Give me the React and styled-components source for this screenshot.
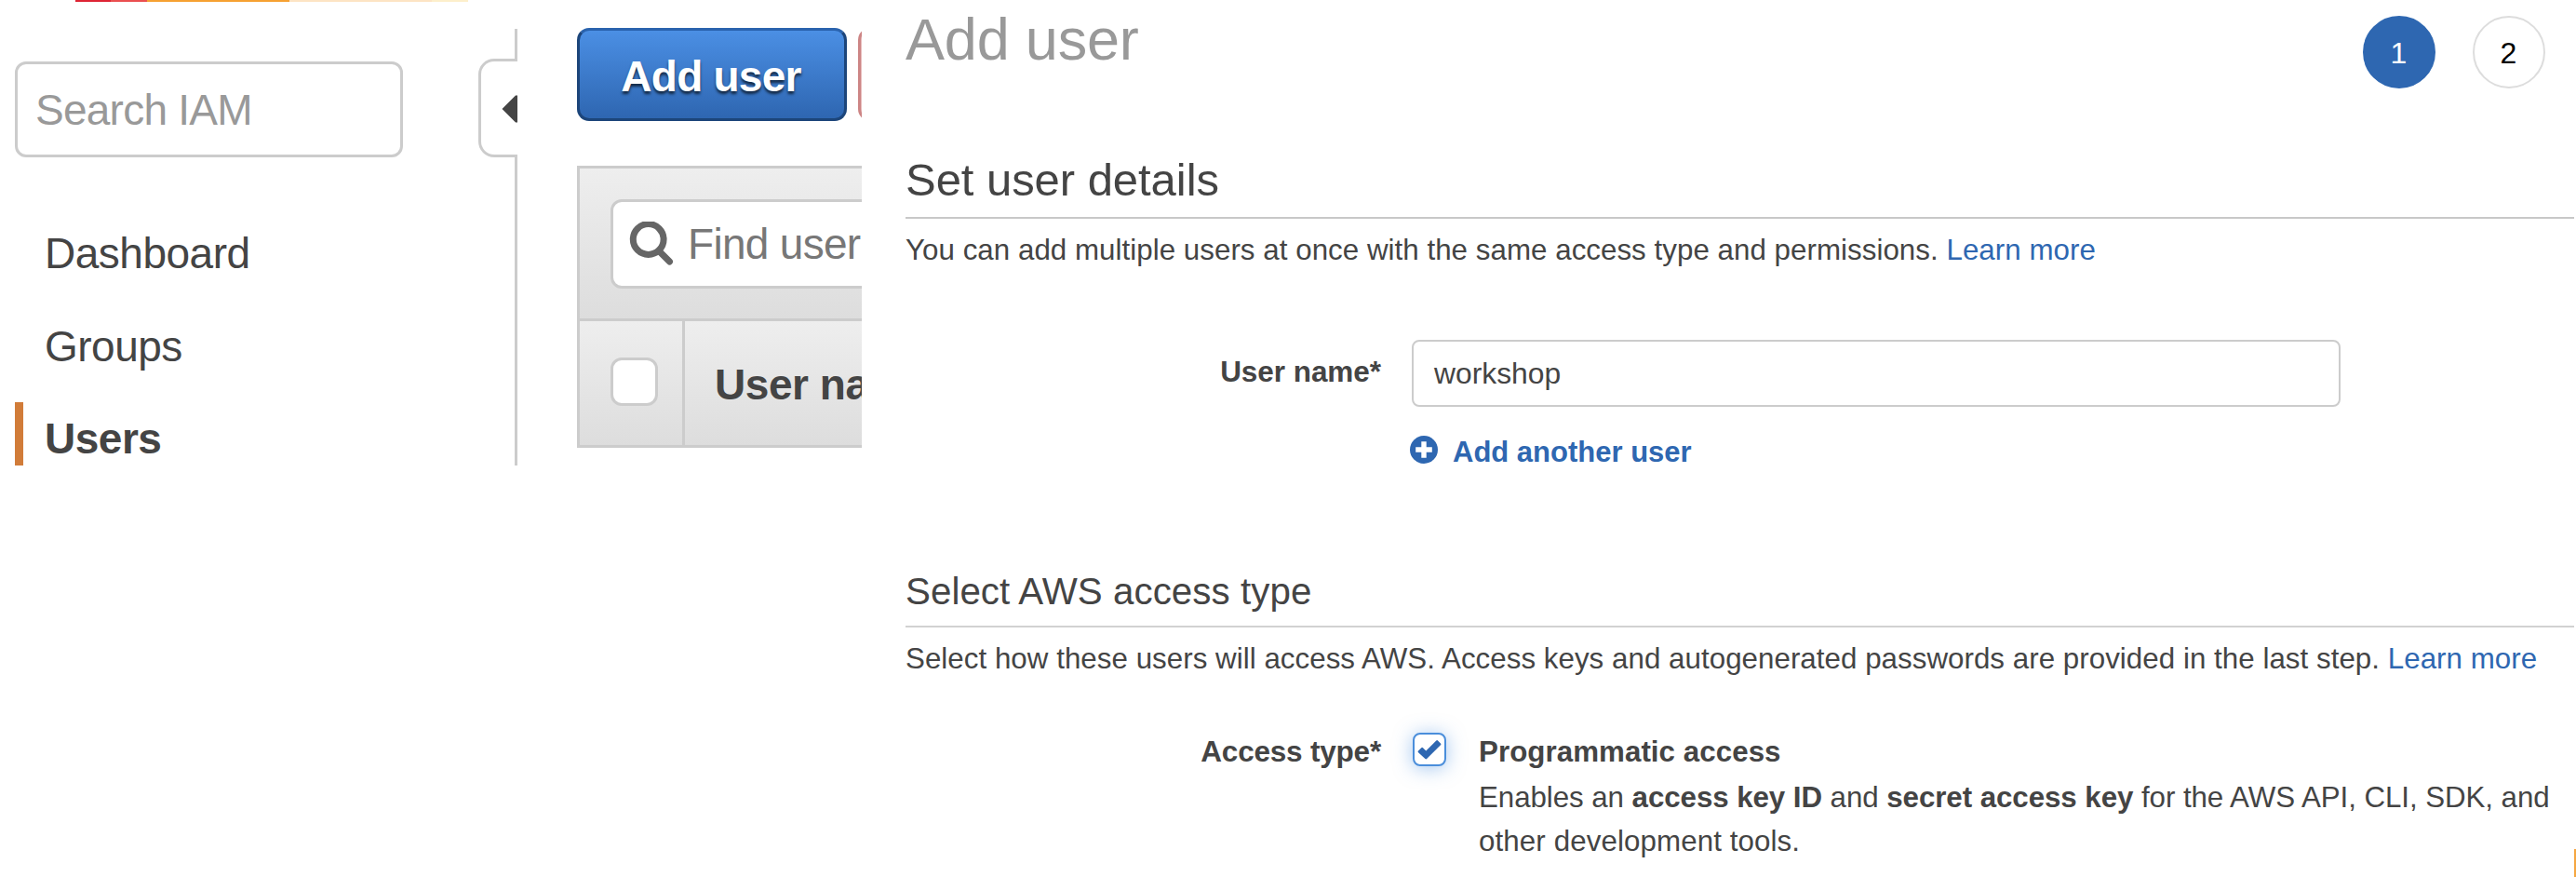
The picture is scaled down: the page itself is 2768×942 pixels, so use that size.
import React from "react";
import styled, { createGlobalStyle } from "styled-components";

const GlobalStyle = createGlobalStyle`
  body {
    margin: 0;
    background: #fff;
    color: #444;
    font-family: "Liberation Sans", Arial, Helvetica, sans-serif;
  }
  * { box-sizing: border-box; }
  h1, h2, h3, p { margin: 0; font-weight: 400; }
`;

const Page = styled.div`
  display: flex;
  width: 2768px;
  height: 942px;
  overflow: hidden;
`;

/* Sidebar */

const Sidebar = styled.aside`
  width: 556px;
  flex: none;
`;

const Stripe = styled.div`
  display: flex;
  height: 2px;
  padding-left: 81px;
`;

const StripePart = styled.span`
  width: ${(p) => p.$w}px;
  background: ${(p) => p.$color};
`;

const SidebarBody = styled.div`
  display: flex;
  height: 498px;
`;

const SidebarMain = styled.div`
  width: 498px;
  margin-left: 16px;
`;

const SidebarSearch = styled.div`
  display: flex;
  align-items: center;
  width: 417px;
  height: 103px;
  margin-top: 64px;
  padding-left: 19px;
  border: 3px solid #ccc;
  border-radius: 12px;
  color: #999;
  font-size: 46px;
  letter-spacing: -0.75px;
`;

const Nav = styled.nav`
  display: flex;
  flex-direction: column;
  margin-top: 53px;
`;

const NavItem = styled.a`
  height: ${(p) => (p.$active ? 68 : 99.5)}px;
  margin-top: ${(p) => (p.$active ? 11 : 0)}px;
  line-height: ${(p) => (p.$active ? 78 : 100)}px;
  padding-left: 23px;
  border-left: 9px solid ${(p) => (p.$active ? "#d17c39" : "transparent")};
  font-size: 46px;
  font-weight: ${(p) => (p.$active ? 700 : 400)};
  letter-spacing: -0.5px;
`;

const Edge = styled.div`
  display: flex;
  flex-direction: column;
  align-items: flex-end;
  width: 42px;
  padding-top: 29px;
`;

const EdgeLine = styled.div`
  width: 3px;
  height: ${(p) => p.$h}px;
  background: #ccc;
`;

const CollapseTab = styled.div`
  display: flex;
  align-items: center;
  justify-content: flex-end;
  width: 42px;
  height: 106px;
  padding-top: 2px;
  border: 3px solid #ccc;
  border-right: 0;
  border-radius: 17px 0 0 17px;
`;

/* User list */

const UserList = styled.section`
  width: 370px;
  flex: none;
  padding: 30px 0 0 64px;
  overflow: hidden;
`;

const Actions = styled.div`
  display: flex;
  gap: 12px;
  height: 100px;
`;

const PrimaryButton = styled.div`
  display: flex;
  flex: none;
  align-items: center;
  justify-content: center;
  width: 290px;
  padding: 3px 2px 0 0;
  border: 3px solid #1c457a;
  border-top-color: #2a63ae;
  border-radius: 13px;
  background: linear-gradient(#4b8fe4, #2e66b1);
  color: #fff;
  font-size: 46px;
  font-weight: 700;
  letter-spacing: -0.75px;
  text-shadow: 0 3px 3px rgba(0, 0, 0, 0.65);
`;

const DangerButton = styled.div`
  flex: none;
  width: 280px;
  border: 3px solid #cd8585;
  border-radius: 13px;
  background: #e8bcbc;
`;

const Panel = styled.div`
  width: 600px;
  height: 303px;
  margin-top: 48px;
  border: 3px solid #ccc;
`;

const Toolbar = styled.div`
  height: 161px;
  padding: 33px;
  background: linear-gradient(#eee, #ddd);
`;

const FindBox = styled.div`
  display: flex;
  align-items: center;
  gap: 15px;
  height: 96px;
  padding-left: 17px;
  border: 3px solid #ccc;
  border-radius: 12px;
  background: #fff;
  color: #777;
  font-size: 46px;
  letter-spacing: -0.7px;
  white-space: nowrap;
`;

const TableHead = styled.div`
  display: flex;
  height: 136px;
  border-top: 3px solid #ccc;
  background: linear-gradient(#eee, #ddd);
`;

const SelectCell = styled.div`
  display: flex;
  align-items: center;
  width: 113px;
  padding: 0 0 3px 33px;
  border-right: 3px solid #ccc;
`;

const EmptyCheckbox = styled.span`
  width: 51px;
  height: 52px;
  border: 3px solid #ccc;
  border-radius: 12px;
  background: #fff;
`;

const HeadCell = styled.div`
  padding: 2px 0 0 32px;
  line-height: 133px;
  font-size: 46px;
  font-weight: 700;
  letter-spacing: -0.45px;
  white-space: nowrap;
`;

/* Wizard */

const Wizard = styled.main`
  width: 1840px;
  flex: none;
  padding-left: 47px;
`;

const WizardHeader = styled.header`
  display: flex;
  justify-content: space-between;
  height: 163px;
`;

const Title = styled.h1`
  margin-top: 6px;
  color: #999;
  font-size: 63px;
  line-height: 72px;
  letter-spacing: -0.2px;
`;

const Steps = styled.div`
  display: flex;
  gap: 40px;
  padding: 17px 31px 0 0;
`;

const Step = styled.span`
  width: 78px;
  height: 78px;
  padding-right: 1px;
  border: 2px solid ${(p) => (p.$current ? "#2e67b1" : "#ddd")};
  border-radius: 50%;
  background: ${(p) => (p.$current ? "#2e67b1" : "#fff")};
  color: ${(p) => (p.$current ? "#fff" : "#000")};
  font-size: 32px;
  line-height: 76px;
  text-align: center;
`;

const SectionTitle = styled.h2`
  height: 72px;
  border-bottom: 2px solid #c8c8c8;
  font-size: 49px;
  line-height: 60px;
  letter-spacing: -0.05px;
`;

const SubsectionTitle = styled.h3`
  height: 63px;
  margin-top: 102px;
  border-bottom: 2px solid #d2d2d2;
  font-size: 40.3px;
  line-height: 50px;
  letter-spacing: 0.05px;
`;

const Intro = styled.p`
  margin-top: 10px;
  font-size: 31.3px;
  line-height: 47px;
  letter-spacing: 0.035px;
  white-space: nowrap;
`;

const Link = styled.a`
  color: #2e67b1;
`;

const FormRow = styled.div`
  display: flex;
  margin-top: ${(p) => p.$top}px;
`;

const Label = styled.div`
  width: 511px;
  flex: none;
  padding-top: ${(p) => p.$drop || 0}px;
  font-size: 31.5px;
  line-height: 47px;
  font-weight: 700;
  letter-spacing: ${(p) => p.$ls || 0}px;
  text-align: right;
`;

const Field = styled.div`
  margin-left: 33px;
`;

const TextInput = styled.div`
  display: flex;
  align-items: center;
  width: 998px;
  height: 72px;
  padding-left: 22px;
  border: 2px solid #ccc;
  border-radius: 8px;
  font-size: 31.8px;
`;

const AddAnother = styled.a`
  display: flex;
  align-items: flex-start;
  gap: 16px;
  margin: 25px 0 0 -2px;
  color: #2e67b1;
  font-size: 31px;
  line-height: 47px;
  font-weight: 700;

  svg {
    margin-top: 6px;
  }
`;

const Checked = styled.span`
  display: flex;
  flex: none;
  width: 36px;
  height: 36px;
  margin: 3px 35px 0 34px;
  border: 2px solid #4a8edb;
  border-radius: 8px;
  background: #fff;
  box-shadow: 0 2px 20px rgba(74, 144, 226, 0.5);
`;

const Option = styled.div`
  font-size: 31.3px;
  line-height: 47px;
  white-space: nowrap;
`;

const OptionName = styled.div`
  margin-bottom: 2px;
  font-weight: 700;
  letter-spacing: 0.05px;
`;

const OptionText = styled.p`
  letter-spacing: ${(p) => p.$ls}px;
`;

const RightEdge = styled.div`
  width: 2px;
  flex: none;
  padding-top: 912px;
`;

const EdgeMark = styled.div`
  height: 30px;
  background: #f5a742;
`;

const SearchIcon = () => (
  <svg width="48" height="48" viewBox="0 0 48 48" fill="none" stroke="#666">
    <circle cx="20.7" cy="19" r="16.4" strokeWidth="7" />
    <path d="M32 31.500l11.500 11.500" strokeWidth="7" strokeLinecap="round" />
  </svg>
);

const PlusIcon = () => (
  <svg width="30" height="30" viewBox="0 0 30 30">
    <circle cx="15" cy="15" r="15" fill="#2e67b1" />
    <path d="M15 6.200v17.600M6.200 15h17.600" stroke="#fff" strokeWidth="5.400" />
  </svg>
);

const CheckIcon = () => (
  <svg width="32" height="32" viewBox="0 0 32 32">
    <path
      d="M4 17.500l3.300-3.300a1.200 1.200 0 0 1 1.700 0l3.300 3.300L23.300 6.500a1.200 1.200 0 0 1 1.700 0l3 3a1.200 1.200 0 0 1 0 1.700L13.100 26a1.200 1.200 0 0 1-1.700 0L4 19.200a1.200 1.200 0 0 1 0-1.700z"
      fill="#2e67b1"
    />
  </svg>
);

const stripes = [
  [38, "#de2434"],
  [39, "#ea4f50"],
  [153, "#f6a132"],
  [153, "#fde4c4"],
  [39, "#fdefcb"],
];

const navItems = ["Dashboard", "Groups", "Users"];

export default function App() {
  return (
    <>
      <GlobalStyle />
      <Page>
        <Sidebar>
          <Stripe>
            {stripes.map(([w, color]) => (
              <StripePart key={color} $w={w} $color={color} />
            ))}
          </Stripe>
          <SidebarBody>
            <SidebarMain>
              <SidebarSearch>Search IAM</SidebarSearch>
              <Nav>
                {navItems.map((name) => (
                  <NavItem key={name} $active={name === "Users"}>
                    {name}
                  </NavItem>
                ))}
              </Nav>
            </SidebarMain>
            <Edge>
              <EdgeLine $h={32} />
              <CollapseTab>
                <svg width="17" height="30" viewBox="0 0 17 30">
                  <path d="M0.500 15L15 0.500h2v29h-2z" fill="#444" />
                </svg>
              </CollapseTab>
              <EdgeLine $h={331} />
            </Edge>
          </SidebarBody>
        </Sidebar>

        <UserList>
          <Actions>
            <PrimaryButton>Add user</PrimaryButton>
            <DangerButton />
          </Actions>
          <Panel>
            <Toolbar>
              <FindBox>
                <SearchIcon />
                Find user
              </FindBox>
            </Toolbar>
            <TableHead>
              <SelectCell>
                <EmptyCheckbox />
              </SelectCell>
              <HeadCell>User na</HeadCell>
            </TableHead>
          </Panel>
        </UserList>

        <Wizard>
          <WizardHeader>
            <Title>Add user</Title>
            <Steps>
              <Step $current>1</Step>
              <Step>2</Step>
            </Steps>
          </WizardHeader>

          <SectionTitle>Set user details</SectionTitle>
          <Intro>
            You can add multiple users at once with the same access type and permissions.{" "}
            <Link>Learn more</Link>
          </Intro>
          <FormRow $top={73}>
            <Label $drop={11} $ls={-0.05}>
              User name*
            </Label>
            <Field>
              <TextInput>workshop</TextInput>
              <AddAnother>
                <PlusIcon />
                Add another user
              </AddAnother>
            </Field>
          </FormRow>

          <SubsectionTitle>Select AWS access type</SubsectionTitle>
          <Intro>
            Select how these users will access AWS. Access keys and autogenerated passwords are
            provided in the last step. <Link>Learn more</Link>
          </Intro>
          <FormRow $top={53}>
            <Label $ls={-0.2}>Access type*</Label>
            <Checked>
              <CheckIcon />
            </Checked>
            <Option>
              <OptionName>Programmatic access</OptionName>
              <OptionText $ls={-0.07}>
                Enables an <b>access key ID</b> and <b>secret access key</b> for the AWS API, CLI,
                SDK, and
              </OptionText>
              <OptionText $ls={0.1}>other development tools.</OptionText>
            </Option>
          </FormRow>
        </Wizard>
        <RightEdge>
          <EdgeMark />
        </RightEdge>
      </Page>
    </>
  );
}
